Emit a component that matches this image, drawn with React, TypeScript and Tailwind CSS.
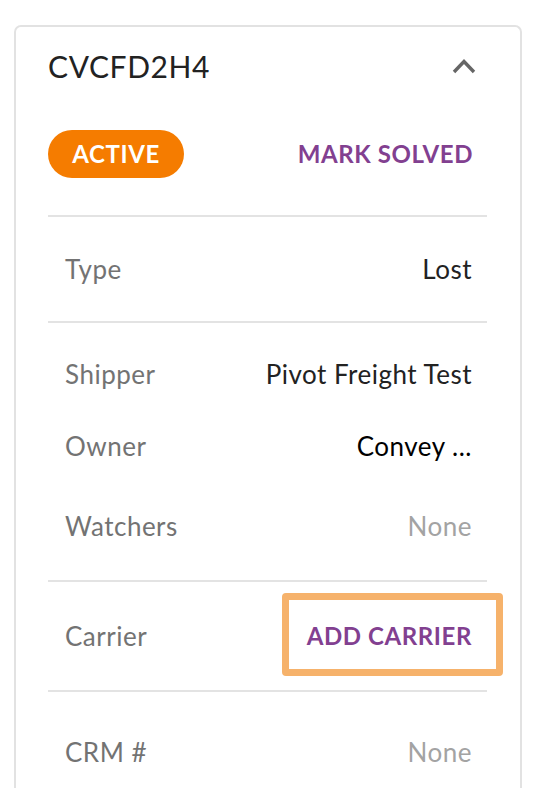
import React from 'react';

const font = { fontFamily: 'Lato, "Open Sans", Arial, sans-serif' };

type Row = { label: string; value: string; tone?: 'dark' | 'black' | 'muted' };

const Field: React.FC<Row & { className?: string }> = ({ label, value, tone = 'dark', className = '' }) => {
  const color =
    tone === 'muted' ? 'text-[#a3a3a3]' : tone === 'black' ? 'text-black' : 'text-[#222222]';
  return (
    <div className={`flex items-center justify-between pl-[17px] pr-[15px] h-[44px] text-[26px] tracking-[0.5px] ${className}`}>
      <span className="text-[#737373]">{label}</span>
      <span className={color}>{value}</span>
    </div>
  );
};

const Divider = () => <div className="h-[2px] bg-[#e3e3e3]" />;

const App: React.FC = () => {
  return (
    <div className="min-h-screen bg-white overflow-hidden" style={font}>
      <div className="ml-[14px] mt-[25px] w-[508px] h-[800px] rounded-t-[7px] border-2 border-b-0 border-[#e2e2e2] bg-white">
        <div className="pl-[32px] pr-[44px]">
          {/* header */}
          <div className="mt-[17px] h-[44px] flex items-center justify-between">
            <h2 className="text-[30px] text-[#222222] tracking-[0.6px]">CVCFD2H4</h2>
            <svg width="24" height="16" viewBox="0 0 24 16">
              <path d="M2 14 L12 3.5 L22 14" fill="none" stroke="#666666" strokeWidth="3.4" />
            </svg>
          </div>
        </div>

        <div className="pl-[32px] pr-[33px]">
          <div className="mt-[42px] flex items-center justify-between">
            <span className="h-[48px] w-[136px] rounded-full bg-[#f57c00] text-white font-bold text-[24px] flex items-center justify-center tracking-[0.6px]">
              ACTIVE
            </span>
            <button className="pr-[14px] text-[#824090] font-bold text-[24px] tracking-[0.6px] leading-[32px]">
              MARK SOLVED
            </button>
          </div>

          <div className="mt-[37px]">
            <Divider />
          </div>

          <div className="py-[30px]">
            <Field label="Type" value="Lost" />
          </div>
          <Divider />

          <div className="pt-[29px] pb-[32px]">
            <Field label="Shipper" value="Pivot Freight Test" />
            <Field label="Owner" value="Convey ..." tone="black" className="mt-[28px]" />
            <Field label="Watchers" value="None" tone="muted" className="mt-[36px]" />
          </div>
          <Divider />

          <div className="py-[32px]">
            <div className="flex items-center justify-between pl-[17px] pr-[15px] h-[44px] text-[26px] tracking-[0.5px]">
              <span className="text-[#737373]">Carrier</span>
              <span className="relative block">
                <span className="block text-[#824090] font-bold text-[24px] tracking-[0.6px] leading-[32px]">ADD CARRIER</span>
                <span className="absolute -left-[25px] -right-[31px] -top-[27px] -bottom-[24px] rounded-[4px] border-[7px] border-[#f6b26b] pointer-events-none" />
              </span>
            </div>
          </div>
          <Divider />

          <div className="pt-[38px]">
            <Field label="CRM #" value="None" tone="muted" />
          </div>
        </div>
      </div>
    </div>
  );
};

export default App;
